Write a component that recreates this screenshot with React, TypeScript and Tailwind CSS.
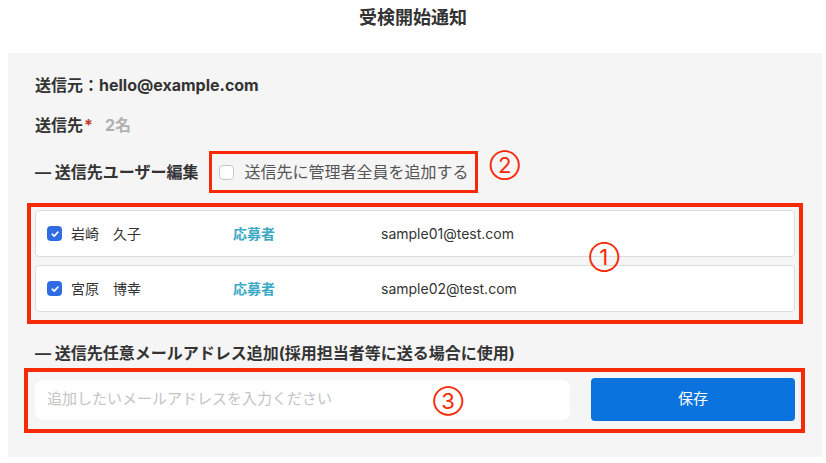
import React from "react";

const RED = "border-[#f72a08]";

function Check() {
  return (
    <span className="flex h-[15px] w-[15px] items-center justify-center rounded-[4px] bg-[#2f6be3]">
      <svg width="10" height="10" viewBox="0 0 10 10" fill="none">
        <path d="M2.2 5.2 L4.2 7.1 L7.9 3.1" stroke="white" strokeWidth="1.6" strokeLinecap="round" strokeLinejoin="round" />
      </svg>
    </span>
  );
}

function Row({ name, email }: { name: string; email: string }) {
  return (
    <div className="flex h-[47px] items-center rounded-[4px] border border-[#dcdcdc] bg-white pl-[11px] text-[14px] text-[#333]">
      <Check />
      <span className="ml-[9px] w-[162px]">{name}</span>
      <span className="w-[148px] font-bold text-[#3ba9c3]">応募者</span>
      <span>{email}</span>
    </div>
  );
}

export default function App() {
  return (
    <div
      className="h-[463px] w-[826px] bg-white"
      style={{ fontFamily: 'Inter, "Noto Sans CJK JP", sans-serif' }}
    >
      <div className="flex h-[53px] justify-center pt-[6px] text-[18px] font-bold leading-[24px] text-[#333]">
        受検開始通知
      </div>
      <div className="ml-[8px] h-[404px] w-[814px] bg-[#f5f5f5] px-[27px] pt-[21px]">
        <div className="text-[16px] font-bold leading-[22px] text-[#333]">送信元：hello@example.com</div>
        <div className="mt-[18px] flex items-center text-[16px] font-bold leading-[22px]">
          <span className="text-[#333]">送信先</span>
          <span className="ml-[1px] text-[#c0392b]">*</span>
          <span className="ml-[12px] text-[#b0b0b0]">2名</span>
        </div>
        <div className="mt-[15px] flex h-[42px] items-center">
          <span className="text-[16px] font-bold leading-[22px] text-[#333]">— 送信先ユーザー編集</span>
          <div className={`ml-[11px] flex h-[42px] items-center border-[3px] ${RED} pl-[7px] pr-[6px]`}>
            <span className="h-[15px] w-[15px] rounded-[4px] border border-[#c8c8c8] bg-white" />
            <span className="ml-[10px] text-[16px] leading-[22px] text-[#555]">送信先に管理者全員を追加する</span>
          </div>
          <span className="relative -top-[7px] ml-[12px] text-[22px] leading-[22px] text-[#f72a08]">②</span>
        </div>
        <div className="relative mt-[17px] flex flex-col gap-[8px]">
          <div className={`absolute -bottom-[12px] -left-[8px] -right-[8px] -top-[7px] border-[4px] ${RED}`} />
          <Row name="岩崎　久子" email="sample01@test.com" />
          <Row name="宮原　博幸" email="sample02@test.com" />
          <span className="absolute left-[554px] top-[36px] text-[22px] leading-[22px] text-[#f72a08]">①</span>
        </div>
        <div className="mt-[30px] text-[16px] font-bold leading-[22px] text-[#333]">
          — 送信先任意メールアドレス追加(採用担当者等に送る場合に使用)
        </div>
        <div className="relative mt-[14px] flex h-[43px] items-center gap-[21px]">
          <div className={`absolute -bottom-[12px] -left-[11px] -right-[10px] -top-[10px] border-[4px] ${RED}`} />
          <div className="flex h-[40px] w-[535px] items-center rounded-[8px] bg-white pl-[12px] text-[15px] text-[#c4c4c4]">
            追加したいメールアドレスを入力ください
          </div>
          <button className="flex h-[43px] w-[204px] items-center justify-center rounded-[4px] bg-[#0a73de] text-[15px] text-white">
            保存
          </button>
          <span className="absolute left-[398px] top-[12px] text-[22px] leading-[22px] text-[#f72a08]">③</span>
        </div>
      </div>
    </div>
  );
}
